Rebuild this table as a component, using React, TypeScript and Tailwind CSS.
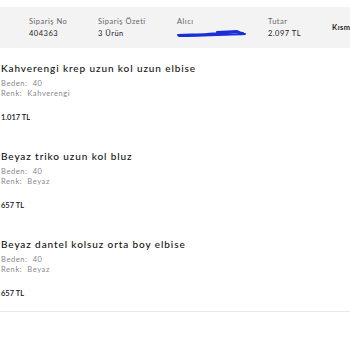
import React from "react";

const items = [
  { title: "Kahverengi krep uzun kol uzun elbise", beden: "40", renk: "Kahverengi", price: "1.017 TL" },
  { title: "Beyaz triko uzun kol bluz", beden: "40", renk: "Beyaz", price: "657 TL" },
  { title: "Beyaz dantel kolsuz orta boy elbise", beden: "40", renk: "Beyaz", price: "657 TL" },
];

export default function App() {
  return (
    <div className="w-[350px] h-[350px] bg-white overflow-hidden" style={{ fontFamily: "Lato, 'Noto Sans', sans-serif" }}>
      <div className="h-[7px]" />
      <div className="h-[41px] bg-[#f3f3f3] flex items-center whitespace-nowrap overflow-hidden">
        <div className="ml-[29px] w-[69px] shrink-0 flex flex-col gap-[3px]">
          <span className="text-[7.5px] leading-[9px] text-[#666] tracking-[0.5px]">Sipariş No</span>
          <span className="text-[7.5px] leading-[9px] text-[#222] tracking-[0.5px]">404363</span>
        </div>
        <div className="w-[79px] shrink-0 flex flex-col gap-[3px]">
          <span className="text-[7.5px] leading-[9px] text-[#666] tracking-[0.5px]">Sipariş Özeti</span>
          <span className="text-[7.5px] leading-[9px] text-[#222] tracking-[0.5px]">3 Ürün</span>
        </div>
        <div className="w-[91px] shrink-0 flex flex-col gap-[3px]">
          <span className="text-[7.5px] leading-[9px] text-[#666] tracking-[0.5px]">Alıcı</span>
          <svg width="70" height="9" viewBox="0 0 70 9">
            <path d="M1 6 C 10 5, 20 6, 30 5 S 50 4, 58 3 L 66 4 M2 7 C 20 7, 40 6, 68 5 M40 3 L 60 2 L 64 4" stroke="#1a2fd8" strokeWidth="2" fill="none" strokeLinecap="round" />
          </svg>
        </div>
        <div className="w-[64px] shrink-0 flex flex-col gap-[3px]">
          <span className="text-[7.5px] leading-[9px] text-[#666] tracking-[0.5px]">Tutar</span>
          <span className="text-[7.5px] leading-[9px] text-[#222] tracking-[0.5px]">2.097 TL</span>
        </div>
        <span className="shrink-0 text-[7.5px] font-bold text-[#222] tracking-[0.5px]">Kısmi İade</span>
      </div>
      <div className="flex flex-col pl-[1px] pt-[14px]">
        {items.map((it, i) => (
          <div key={i} className="h-[88px] flex flex-col">
            <div className="text-[10px] leading-[12px] text-[#111] font-medium tracking-[0.9px]">{it.title}</div>
            <div className="mt-[5px] text-[7.5px] leading-[10px] text-[#888] tracking-[0.6px]">Beden:&nbsp; {it.beden}</div>
            <div className="text-[7.5px] leading-[10px] text-[#888] tracking-[0.6px]">Renk:&nbsp; {it.renk}</div>
            <div className="mt-[14px] text-[7.5px] leading-[10px] text-[#111] font-semibold">{it.price}</div>
          </div>
        ))}
      </div>
      <div className="mt-[-15px] border-t border-[#e8e8e8]" />
    </div>
  );
}
